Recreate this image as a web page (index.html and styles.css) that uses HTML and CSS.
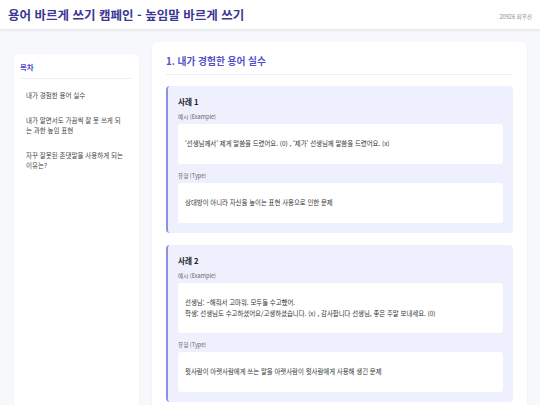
FILE: index.html
```html
<!DOCTYPE html>
<html lang="ko">

<head>
    <meta charset="UTF-8">
    <meta name="viewport" content="width=device-width, initial-scale=1.0">
    <title>용어 바르게 쓰기 캠페인</title>
    <link rel="stylesheet" href="styles.css">
</head>

<body>
    <header class="header">
        <h1 class="title">용어 바르게 쓰기 캠페인 - 높임말 바르게 쓰기</h1>
        <span class="author">20926 최우진</span>
    </header>

    <div class="layout">
        <nav class="toc">
            <h2 class="toc-title">목차</h2>
            <ul class="toc-list">
                <li>내가 경험한 용어 실수</li>
                <li>내가 알면서도 가끔씩 잘 못 쓰게 되는 과한 높임 표현</li>
                <li>자꾸 잘못된 존댓말을 사용하게 되는 이유는?</li>
            </ul>
        </nav>

        <main class="content">
            <h2 class="section-title">1. 내가 경험한 용어 실수</h2>

            <div class="case">
                <h3 class="case-title">사례 1</h3>
                <div class="label">예시 (Example)</div>
                <div class="box">‘선생님께서’ 제게 말씀을 드렸어요. (0) , ‘제가’ 선생님께 말씀을 드렸어요. (x)</div>
                <div class="label">유형 (Type)</div>
                <div class="box">상대방이 아니라 자신을 높이는 표현 사용으로 인한 문제</div>
            </div>

            <div class="case">
                <h3 class="case-title">사례 2</h3>
                <div class="label">예시 (Example)</div>
                <div class="box">선생님: ~해줘서 고마워. 모두들 수고했어.<br>학생: 선생님도 수고하셨어요/고생하셨습니다. (x) , 감사합니다 선생님, 좋은 주말 보내세요. (0)</div>
                <div class="label">유형 (Type)</div>
                <div class="box">윗사람이 아랫사람에게 쓰는 말을 아랫사람이 윗사람에게 사용해 생긴 문제</div>
            </div>
        </main>
    </div>
</body>

</html>
```

FILE: styles.css
```css
* {
    box-sizing: border-box;
}

body {
    margin: 0;
    background-color: #f7f8fb;
    font-family: "Noto Sans CJK KR", "Noto Sans", sans-serif;
    color: #333;
}

.header {
    display: flex;
    justify-content: space-between;
    align-items: center;
    height: 29px;
    padding: 0 8px;
    background-color: #fff;
    box-shadow: 0 1px 3px rgba(0, 0, 0, 0.1);
}

.title {
    margin: 0;
    font-size: 12.5px;
    font-weight: 700;
    color: #3a3795;
}

.author {
    font-size: 5.6px;
    color: #8a8a8a;
    padding-top: 4px;
}

.layout {
    display: flex;
    align-items: flex-start;
    gap: 13px;
    padding: 13px 13px 0 14px;
}

.toc {
    width: 125px;
    flex-shrink: 0;
    height: 360px;
    margin-top: 12px;
    padding: 7px 7px 0 6px;
    background-color: #fff;
    border-radius: 6px;
    box-shadow: 0 1px 3px rgba(0, 0, 0, 0.05);
}

.toc-title {
    margin: 0;
    padding-bottom: 6px;
    font-size: 7.4px;
    font-weight: 700;
    color: #4f46d6;
    border-bottom: 1px solid #eceef2;
}

.toc-list {
    list-style: none;
    margin: 0;
    padding: 0;
}

.toc-list li {
    padding: 8px 6px 7px 6px;
    font-size: 6.5px;
    line-height: 10px;
    color: #444;
}

.toc-list li:first-child {
    padding-top: 11px;
}

.content {
    flex: 1;
    padding: 12px 14px 12px 14px;
    background-color: #fff;
    border-radius: 6px;
    box-shadow: 0 1px 3px rgba(0, 0, 0, 0.05);
}

.section-title {
    margin: 0 0 11px 0;
    padding-bottom: 6px;
    font-size: 9.7px;
    font-weight: 700;
    color: #5650c8;
    border-bottom: 1px solid #eceef2;
}

.case {
    margin-bottom: 12px;
    padding: 10px 10px 10px 10px;
    background-color: #eef0fd;
    border-left: 2px solid #8d90e6;
    border-radius: 4px;
}

.case-title {
    margin: 0 0 5px 0;
    font-size: 7.6px;
    line-height: 12px;
    font-weight: 700;
    color: #222;
}

.label {
    font-size: 5.6px;
    line-height: 8px;
    color: #666;
    margin-bottom: 3px;
}

.box {
    margin-bottom: 8px;
    padding: 14px 7px;
    font-size: 6.4px;
    line-height: 11px;
    color: #333;
    background-color: #fff;
    border-radius: 3px;
    min-height: 40px;
}

.box:last-child {
    margin-bottom: 0;
}
```
